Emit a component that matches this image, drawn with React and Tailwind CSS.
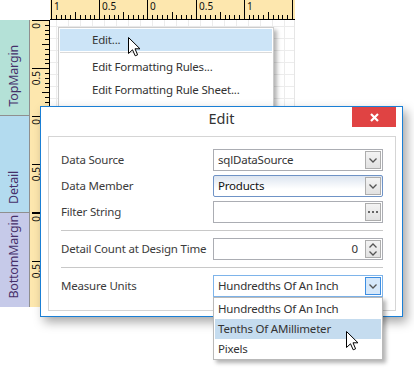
import React from 'react';

const FONT = "font-['Segoe_UI','Noto_Sans',sans-serif]";

const TopRuler = () => {
  const ticks = Array.from({ length: 51 }, (_, i) => {
    const x = Math.round(1 + i * 4.82) + 0.5;
    const top = i % 10 === 0 ? 0 : i % 5 === 0 ? 12 : 15;
    return <line key={i} x1={x} x2={x} y1={top} y2={19} stroke="#000" />;
  });
  const labels = ['1', '0.5', '0', '0.5', '1'];
  return (
    <svg width="245" height="20" className="block">
      <rect width="245" height="20" fill="#fde7ae" />
      {ticks}
      <line x1="0" x2="245" y1="19.5" y2="19.5" stroke="#000" />
      {labels.map((t, i) => (
        <text key={i} x={Math.round(1 + i * 48.2) + 3} y="10" fontSize="10" fontFamily="Noto Sans, sans-serif" fill="#111">
          {t}
        </text>
      ))}
    </svg>
  );
};

const bands = [
  { start: 0, h: 96 },
  { start: 96, h: 97 },
  { start: 193, h: 94 },
];

const SideRuler = () => (
  <svg width="20" height="287" className="block">
    <rect width="20" height="287" fill="#fde7ae" />
    {bands.map((b, bi) => {
      const items = [];
      for (let i = 0; i * 4.82 < b.h; i++) {
        const y = Math.round(b.start + i * 4.82) + 0.5;
        const left = i % 10 === 0 ? 2 : i % 5 === 0 ? 12 : 15;
        items.push(<line key={i} x1={left} x2={19} y1={y} y2={y} stroke="#000" />);
      }
      ['0', '0.5'].forEach((t, k) => {
        items.push(
          <text
            key={'t' + k}
            transform={`translate(10 ${b.start + k * 48 + 3}) rotate(-90)`}
            textAnchor="end"
            fontSize="10"
            fontFamily="Noto Sans, sans-serif"
            fill="#111"
          >
            {t}
          </text>
        );
      });
      return <g key={bi}>{items}</g>;
    })}
    <line x1="19.5" x2="19.5" y1="0" y2="287" stroke="#000" />
  </svg>
);

const Band = ({ label, className }) => (
  <div className={`flex flex-col items-center justify-end pb-[8px] border-b border-[#8f8f8f] ${className}`}>
    <span className="[writing-mode:vertical-rl] rotate-180 text-[12.5px] tracking-[-0.2px] leading-none text-[#46306a]">{label}</span>
  </div>
);

const Cursor = ({ className }) => (
  <svg width="13" height="20" viewBox="0 0 13 20" className={className}>
    <path d="M0.5 0.5 L0.5 16.5 L4.5 12.8 L7.2 18.8 L9.6 17.8 L7 11.8 L12 11.8 Z" fill="#fff" stroke="#000" strokeWidth="1" strokeLinejoin="miter" />
  </svg>
);

const Chevron = ({ up }) => (
  <svg width="8" height="5" viewBox="0 0 8 5">
    <path d={up ? 'M0.5 4.5 L4 1 L7.5 4.5' : 'M0.5 0.5 L4 4 L7.5 0.5'} stroke="#555" fill="none" strokeWidth="1.3" />
  </svg>
);

const DropButton = ({ active }) => (
  <div
    className={`w-[16px] h-[18px] mr-[1px] flex items-center justify-center border ${
      active ? 'border-[#3d8ee2] bg-[#d6e8fa]' : 'border-[#adadad] bg-[linear-gradient(#f3f3f3,#e2e2e2)]'
    }`}
  >
    <Chevron />
  </div>
);

const DotsButton = () => (
  <div className="w-[16px] h-[18px] mr-[1px] flex items-center justify-center border border-[#adadad] bg-[linear-gradient(#f3f3f3,#e2e2e2)]">
    <svg width="10" height="2" viewBox="0 0 10 2">
      <rect x="0" y="0" width="2" height="2" fill="#666" />
      <rect x="4" y="0" width="2" height="2" fill="#666" />
      <rect x="8" y="0" width="2" height="2" fill="#666" />
    </svg>
  </div>
);

const SpinButton = () => (
  <div className="w-[16px] h-[18px] mr-[1px] flex flex-col items-center justify-center gap-[3px] border border-[#adadad] bg-[linear-gradient(#f3f3f3,#e2e2e2)]">
    <Chevron up />
    <Chevron />
  </div>
);

const Row = ({ label, children }) => (
  <div className="flex items-center h-[22px]">
    <div className="w-[152px] whitespace-nowrap text-[#3b3b3b]">{label}</div>
    {children}
  </div>
);

const fieldBase = 'w-[170px] h-[22px] flex items-center pl-[4px] text-[#333]';
const TEXT = 'text-[11.5px] tracking-[-0.2px]';

const App = () => (
  <div className={`relative w-[414px] h-[373px] overflow-hidden bg-white ${FONT}`}>
    {/* designer surface */}
    <div className="flex h-[20px]">
      <div className="w-[50px]" />
      <TopRuler />
    </div>
    <div className="flex h-[287px]">
      <div className="w-[30px] flex flex-col border-r border-[#8f8f8f]">
        <Band label="TopMargin" className="h-[96px] bg-[#b4e1d7]" />
        <Band label="Detail" className="h-[97px] bg-[#b3dbef]" />
        <Band label="BottomMargin" className="h-[94px] bg-[#c6cae9] border-b-0" />
      </div>
      <SideRuler />
      <div className="w-[245px] border-r border-[#e6e6e6] [background-image:linear-gradient(to_right,#ececec_1px,transparent_1px),linear-gradient(to_bottom,#ececec_1px,transparent_1px)] [background-size:12px_12px] [background-position:6px_6px]" />
    </div>

    {/* context menu */}
    <div className={`absolute left-[58px] top-[27px] w-[216px] h-[92px] bg-white border border-[#cccccc] shadow-[3px_3px_4px_rgba(0,0,0,0.3)] p-[1px] text-[#333] ${TEXT}`}>
      <div className="h-[22px] bg-[#cce4f7] flex items-center pl-[32px]">Edit...</div>
      <div className="h-px bg-[#dadada] mt-[1px]" />
      <div className="h-[23px] mt-[2px] flex items-center pl-[32px]">Edit Formatting Rules...</div>
      <div className="h-[23px] flex items-center pl-[32px]">Edit Formatting Rule Sheet...</div>
    </div>
    <Cursor className="absolute left-[128px] top-[37px]" />

    {/* edit dialog */}
    <div className={`absolute left-[40px] top-[106px] w-[363px] h-[211px] bg-white border border-[#1a7fd5] shadow-[4px_5px_10px_rgba(0,0,0,0.35)] flex flex-col ${TEXT}`}>
      <div className="relative h-[29px] flex justify-center">
        <span className="text-[14.5px] tracking-normal leading-[22px] text-[#333]">Edit</span>
        <div className="absolute right-[6px] top-0 w-[44px] h-[20px] bg-[#e04343] flex items-center justify-center">
          <svg width="9" height="9" viewBox="0 0 9 9">
            <path d="M1 1 L8 8 M8 1 L1 8" stroke="#fff" strokeWidth="2.2" />
          </svg>
        </div>
      </div>
      <div className="ml-[7px] mr-[6px] h-[175px] border border-[#d5d5d5] pl-[12px] pt-[12px] flex flex-col">
        <div className="flex flex-col gap-[4px]">
          <Row label="Data Source">
            <div className={`${fieldBase} border border-[#abadb3] bg-white`}>
              <span className="flex-1">sqlDataSource</span>
              <DropButton />
            </div>
          </Row>
          <Row label="Data Member">
            <div className={`${fieldBase} border border-[#6f93c6] rounded-[2px] bg-[linear-gradient(#dde5f0,#ffffff_65%)]`}>
              <span className="flex-1 text-[#111]">Products</span>
              <DropButton />
            </div>
          </Row>
          <Row label="Filter String">
            <div className={`${fieldBase} border border-[#abadb3] bg-white`}>
              <span className="flex-1" />
              <DotsButton />
            </div>
          </Row>
        </div>
        <div className="w-[322px] h-px bg-[#c8c8c8] mt-[7px] mb-[7px]" />
        <Row label="Detail Count at Design Time">
          <div className={`${fieldBase} border border-[#abadb3] bg-white`}>
            <span className="flex-1 text-right pr-[7px]">0</span>
            <SpinButton />
          </div>
        </Row>
        <div className="w-[322px] h-px bg-[#c8c8c8] mt-[7px] mb-[7px]" />
        <Row label="Measure Units">
          <div className={`${fieldBase} border border-[#7eb4ea] bg-white`}>
            <span className="flex-1">Hundredths Of An Inch</span>
            <DropButton active />
          </div>
        </Row>
      </div>
    </div>

    {/* dropdown list */}
    <div className={`absolute left-[213px] top-[297px] w-[170px] h-[63px] bg-white border border-[#b9b9b9] shadow-[3px_3px_4px_rgba(0,0,0,0.3)] p-[1px] text-[#333] ${TEXT}`}>
      <div className="h-[20px] flex items-center pl-[3px]">Hundredths Of An Inch</div>
      <div className="h-[20px] flex items-center pl-[3px] bg-[#c5dcef]">Tenths Of AMillimeter</div>
      <div className="h-[20px] flex items-center pl-[3px]">Pixels</div>
    </div>
    <Cursor className="absolute left-[346px] top-[331px]" />
  </div>
);

export default App;
